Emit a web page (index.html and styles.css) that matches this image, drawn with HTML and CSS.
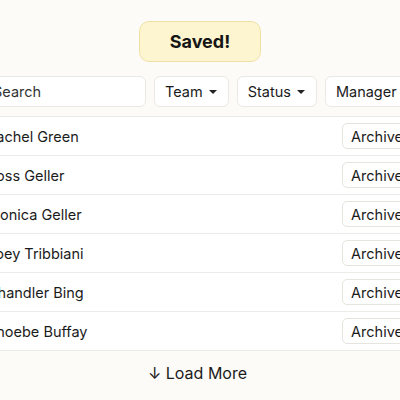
FILE: index.html
```html
<!DOCTYPE html>
<html>
<head>
<meta charset="utf-8">
<link rel="stylesheet" href="styles.css">
</head>
<body>
<div class="page">
  <div class="toast-wrap"><div class="toast">Saved!</div></div>
  <div class="filters">
    <div class="search">Search</div>
    <div class="dropdown">Team <span class="caret"></span></div>
    <div class="dropdown">Status <span class="caret"></span></div>
    <div class="dropdown">Manager <span class="caret"></span></div>
  </div>
  <div class="list">
    <div class="row"><span class="name">Rachel Green</span><button class="btn">Archive</button></div>
    <div class="row"><span class="name">Ross Geller</span><button class="btn">Archive</button></div>
    <div class="row"><span class="name">Monica Geller</span><button class="btn">Archive</button></div>
    <div class="row"><span class="name">Joey Tribbiani</span><button class="btn">Archive</button></div>
    <div class="row"><span class="name">Chandler Bing</span><button class="btn">Archive</button></div>
    <div class="row"><span class="name">Phoebe Buffay</span><button class="btn">Archive</button></div>
  </div>
  <div class="more">↓ Load More</div>
</div>
</body>
</html>
```
FILE: styles.css
```css
html, body {
  margin: 0;
  padding: 0;
  background: #fcfbf7;
  overflow: hidden;
  width: 400px;
  height: 400px;
}
body {
  font-family: Inter, "Noto Sans", sans-serif;
  color: #1b1b1b;
}
.page {
  width: 440px;
  margin-left: -20px;
  padding-top: 21px;
}
.toast-wrap {
  display: flex;
  justify-content: center;
}
.toast {
  width: 120px;
  height: 39px;
  box-sizing: content-box;
  display: flex;
  align-items: center;
  justify-content: center;
  background: #fdf5cf;
  border: 1px solid #efe1a6;
  border-radius: 10px;
  font-weight: 700;
  font-size: 18px;
  color: #151515;
}
.filters {
  display: flex;
  gap: 8px;
  margin-top: 14px;
}
.search, .dropdown {
  flex-shrink: 0;
  height: 31px;
  box-sizing: border-box;
  border: 1px solid #ebe9e4;
  border-radius: 6px;
  background: #fff;
  display: flex;
  align-items: center;
  font-size: 14.5px;
}
.search {
  width: 166px;
  padding-left: 12px;
  color: #333;
}
.dropdown {
  padding: 0 11px 0 10px;
  gap: 6px;
}
.caret {
  width: 0;
  height: 0;
  border-left: 4px solid transparent;
  border-right: 4px solid transparent;
  border-top: 4px solid #222;
}
.list {
  margin-top: 9px;
  background: #fff;
  border-top: 1px solid #ecebe7;
}
.row {
  height: 38px;
  border-bottom: 1px solid #ecebe7;
  display: flex;
  align-items: center;
  justify-content: space-between;
  padding: 0 8px 0 7px;
  font-size: 14.5px;
}
.btn {
  font-family: inherit;
  font-size: 14.5px;
  color: #1b1b1b;
  height: 26px;
  padding: 0 8px;
  background: #fff;
  border: 1px solid #e6e4df;
  border-radius: 5px;
}
.more {
  text-align: center;
  font-size: 16px;
  margin-top: 12px;
  margin-left: -5px;
}
```
